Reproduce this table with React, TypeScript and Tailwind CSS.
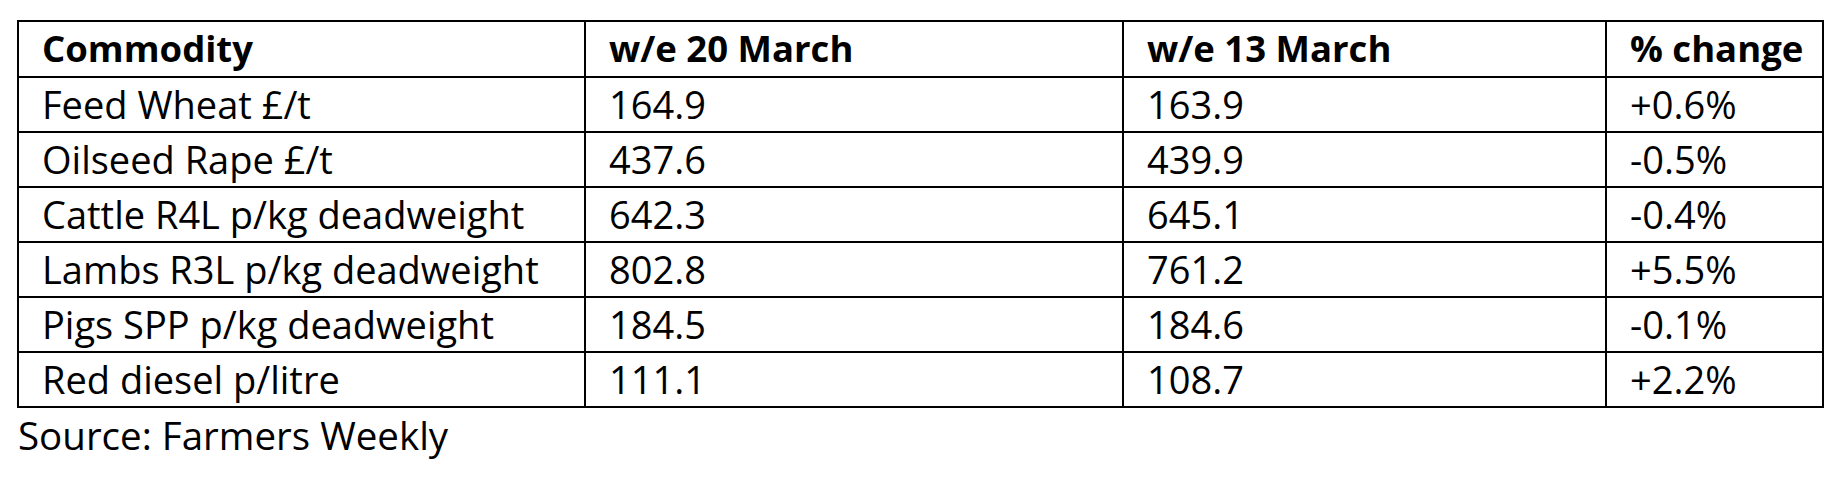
import React from "react";

const rows = [
  ["Feed Wheat £/t", "164.9", "163.9", "+0.6%"],
  ["Oilseed Rape £/t", "437.6", "439.9", "-0.5%"],
  ["Cattle R4L p/kg deadweight", "642.3", "645.1", "-0.4%"],
  ["Lambs R3L p/kg deadweight", "802.8", "761.2", "+5.5%"],
  ["Pigs SPP p/kg deadweight", "184.5", "184.6", "-0.1%"],
  ["Red diesel p/litre", "111.1", "108.7", "+2.2%"],
];

const cell = "border-2 border-black pl-[23px] pr-1 pt-[4px] text-left align-top whitespace-nowrap";

export default function App() {
  return (
    <div
      className="w-[1845px] h-[480px] bg-white text-black pt-5 pl-[17px]"
      style={{ fontFamily: "'Open Sans', Lato, sans-serif" }}
    >
      <table className="border-collapse w-[1805px] table-fixed text-[38px] leading-[44px]">
        <colgroup>
          <col className="w-[567px]" />
          <col className="w-[538px]" />
          <col className="w-[483px]" />
          <col className="w-[217px]" />
        </colgroup>
        <thead>
          <tr className="h-[56px]">
            <th className={cell + " font-bold text-[36.5px]"}>Commodity</th>
            <th className={cell + " font-bold text-[36.5px]"}>w/e 20 March</th>
            <th className={cell + " font-bold text-[36.5px]"}>w/e 13 March</th>
            <th className={cell + " font-bold text-[36.5px]"}>% change</th>
          </tr>
        </thead>
        <tbody>
          {rows.map((r) => (
            <tr key={r[0]} className="h-[55px]">
              {r.map((v, i) => (
                <td key={i} className={cell}>
                  {v}
                </td>
              ))}
            </tr>
          ))}
        </tbody>
      </table>
      <p className="text-[38.5px] leading-[44px] mt-[5px] pl-px">Source: Farmers Weekly</p>
    </div>
  );
}
